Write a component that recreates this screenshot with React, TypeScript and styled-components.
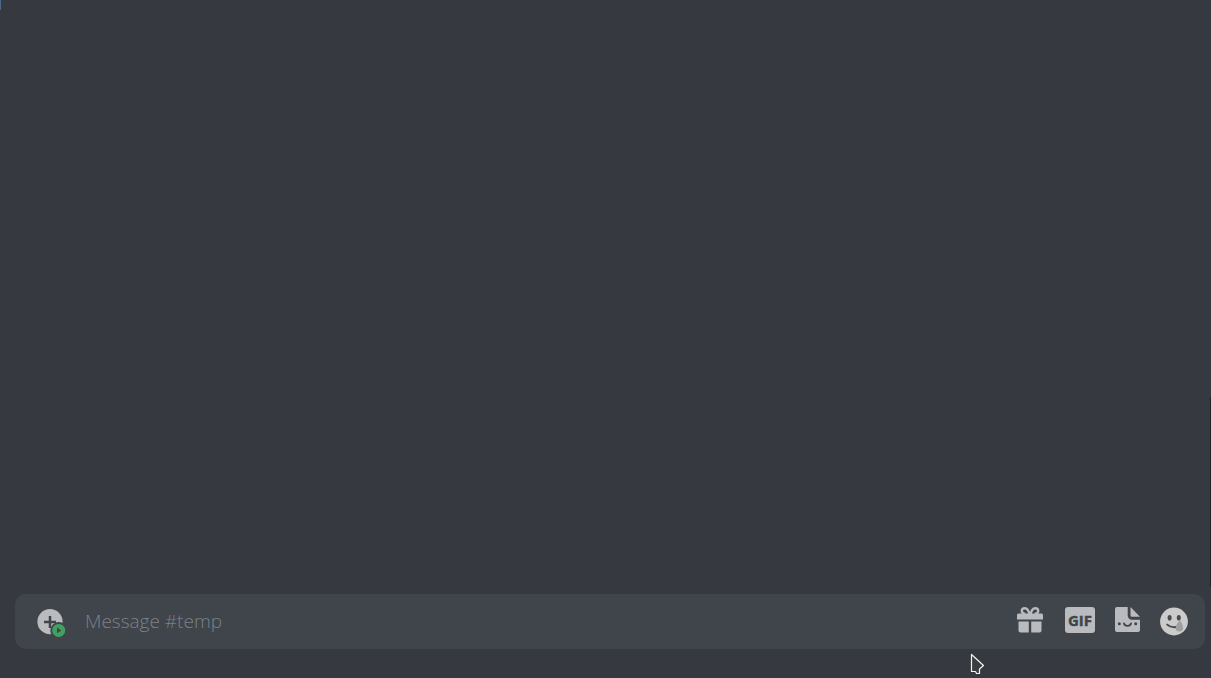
import React from "react";
import styled, { createGlobalStyle } from "styled-components";

const colors = {
  page: "#36393f",
  field: "#40444b",
  icon: "#b9bbbe",
  placeholder: "#7b8188",
  online: "#43a063",
};

const GlobalStyle = createGlobalStyle`
  * {
    box-sizing: border-box;
  }
  body {
    margin: 0;
    background: ${colors.page};
    font-family: "Open Sans", "Noto Sans", sans-serif;
  }
`;

const Page = styled.div`
  position: relative;
  display: flex;
  flex-direction: column;
  min-height: 100vh;
  overflow: hidden;
`;

const Messages = styled.main`
  flex: 1;
  display: flex;
  justify-content: space-between;
`;

const Marker = styled.span`
  width: 1px;
  height: 10px;
  background: #4d668c;
`;

const ScrollThumb = styled.span`
  align-self: flex-end;
  width: 1px;
  height: 28vh;
  margin-bottom: 7px;
  background: #202225;
`;

const Composer = styled.form`
  display: flex;
  align-items: center;
  height: 55px;
  margin: 0 6px 29px 15px;
  padding: 0 17px 0 20px;
  border-radius: 11px;
  background: ${colors.field};
`;

const IconButton = styled.button<{ $width: number }>`
  flex: none;
  display: block;
  width: ${(p) => p.$width}px;
  height: 31px;
  padding: 0;
  border: 0;
  background: none;
  color: ${colors.icon};
  cursor: pointer;

  svg {
    display: block;
    width: 100%;
    height: 100%;
  }
`;

const MessageInput = styled.input`
  flex: 1;
  min-width: 0;
  height: 100%;
  padding: 0 20px 2px 19px;
  border: 0;
  outline: 0;
  background: transparent;
  color: #dcddde;
  font: 300 19px/24px "Open Sans", "Noto Sans", sans-serif;

  &::placeholder {
    color: ${colors.placeholder};
    opacity: 1;
  }
`;

const Actions = styled.div`
  display: flex;
  gap: 20px;
`;

const Pointer = styled.svg`
  position: absolute;
  right: 226px;
  bottom: 2px;
  width: 15px;
  height: 23px;
  pointer-events: none;
`;

const AttachIcon = () => (
  <svg viewBox="0 0 31 31" aria-hidden="true">
    <circle cx="15" cy="15.7" r="12.6" fill="currentColor" />
    <path d="M15 10v12M9 16h12" stroke={colors.field} strokeWidth="2.5" />
    <circle cx="23.7" cy="24.4" r="8.4" fill={colors.field} />
    <circle cx="23.7" cy="24.4" r="6.5" fill={colors.online} />
    <path d="M22 21.6v5.6l4.5-2.8z" fill={colors.field} />
  </svg>
);

const GiftIcon = () => (
  <svg viewBox="0 0 30 31" aria-hidden="true">
    <g fill="none" stroke="currentColor" strokeWidth="2.4">
      <path d="M14.6 9C13.8 4.5 12 2.2 9.8 2.2 7.8 2.2 6.8 3.6 6.8 4.8c0 2 1.6 3 3.6 3.2" />
      <path d="M15.4 9c.8-4.5 2.6-6.8 4.8-6.8 2 0 3 1.4 3 2.6 0 2-1.6 3-3.6 3.2" />
    </g>
    <path
      fill="currentColor"
      d="M3.5 7.5h23A1.5 1.5 0 0 1 28 9V13.5H2V9A1.5 1.5 0 0 1 3.5 7.5zM3.5 15.5H13.8V26.5H5.5A2 2 0 0 1 3.5 24.5zM16.2 15.5H26.5V24.5A2 2 0 0 1 24.5 26.5H16.2z"
    />
  </svg>
);

const GifIcon = () => (
  <svg viewBox="0 0 30 31" aria-hidden="true">
    <rect y="1" width="30" height="26" rx="3" fill="currentColor" />
    <text
      x="15"
      y="20"
      textAnchor="middle"
      fill={colors.field}
      stroke={colors.field}
      strokeWidth="0.4"
      fontFamily="Open Sans, Noto Sans, sans-serif"
      fontSize="15"
      fontWeight="700"
    >
      GIF
    </text>
  </svg>
);

const StickerIcon = () => (
  <svg viewBox="0 0 25 31" aria-hidden="true">
    <path
      fill="currentColor"
      d="M2 1H12.7V9.5A4.2 4.2 0 0 0 16.9 13.7H25V24A2 2 0 0 1 23 26H2A2 2 0 0 1 0 24V3A2 2 0 0 1 2 1zM15.5 1L25 10.8H17A1.5 1.5 0 0 1 15.5 9.3z"
    />
    <g fill={colors.field}>
      <circle cx="4.3" cy="17.7" r="1.5" />
      <circle cx="20.7" cy="17.7" r="1.5" />
    </g>
    <path
      d="M9 17.4c.7 3.4 6.3 3.4 7 0"
      fill="none"
      stroke={colors.field}
      strokeWidth="1.8"
      strokeLinecap="round"
    />
  </svg>
);

const EmojiIcon = () => (
  <svg viewBox="0 0 28 31" aria-hidden="true">
    <circle cx="14" cy="15.5" r="13.9" fill="#cbcbcb" />
    <g fill="#4b4b4c">
      <ellipse cx="9.6" cy="11.8" rx="2" ry="2.8" />
      <ellipse cx="18.8" cy="11.8" rx="2" ry="2.8" />
    </g>
    <path
      d="M7.2 18.6c2.6 2.5 6.5 3.2 10.5 2.2"
      fill="none"
      stroke="#4b4b4c"
      strokeWidth="2"
      strokeLinecap="round"
    />
    <path
      d="M19.8 14.2c1.5 2.4 3.3 4.7 3.3 7.5a3.7 3.7 0 0 1-7.4 0c0-2.8 2.6-5.1 4.1-7.5z"
      fill="#9d9fa1"
    />
  </svg>
);

export default function App() {
  return (
    <Page>
      <GlobalStyle />
      <Messages>
        <Marker />
        <ScrollThumb />
      </Messages>
      <Composer onSubmit={(e: React.FormEvent) => e.preventDefault()}>
        <IconButton type="button" $width={31} aria-label="Add attachment">
          <AttachIcon />
        </IconButton>
        <MessageInput
          type="text"
          placeholder="Message #temp"
          aria-label="Message #temp"
        />
        <Actions>
          <IconButton type="button" $width={30} aria-label="Send a gift">
            <GiftIcon />
          </IconButton>
          <IconButton type="button" $width={30} aria-label="Open GIF picker">
            <GifIcon />
          </IconButton>
          <IconButton type="button" $width={25} aria-label="Open sticker picker">
            <StickerIcon />
          </IconButton>
          <IconButton type="button" $width={28} aria-label="Select emoji">
            <EmojiIcon />
          </IconButton>
        </Actions>
      </Composer>
      <Pointer viewBox="0 0 15 23" aria-hidden="true">
        <path
          d="M1.5 1.5V18.5H5.5L6.5 20.5H9.5V16L13.5 12.5z"
          fill="#3c3d42"
          stroke="#f2f2f2"
          strokeWidth="1.2"
          strokeLinejoin="round"
        />
      </Pointer>
    </Page>
  );
}
